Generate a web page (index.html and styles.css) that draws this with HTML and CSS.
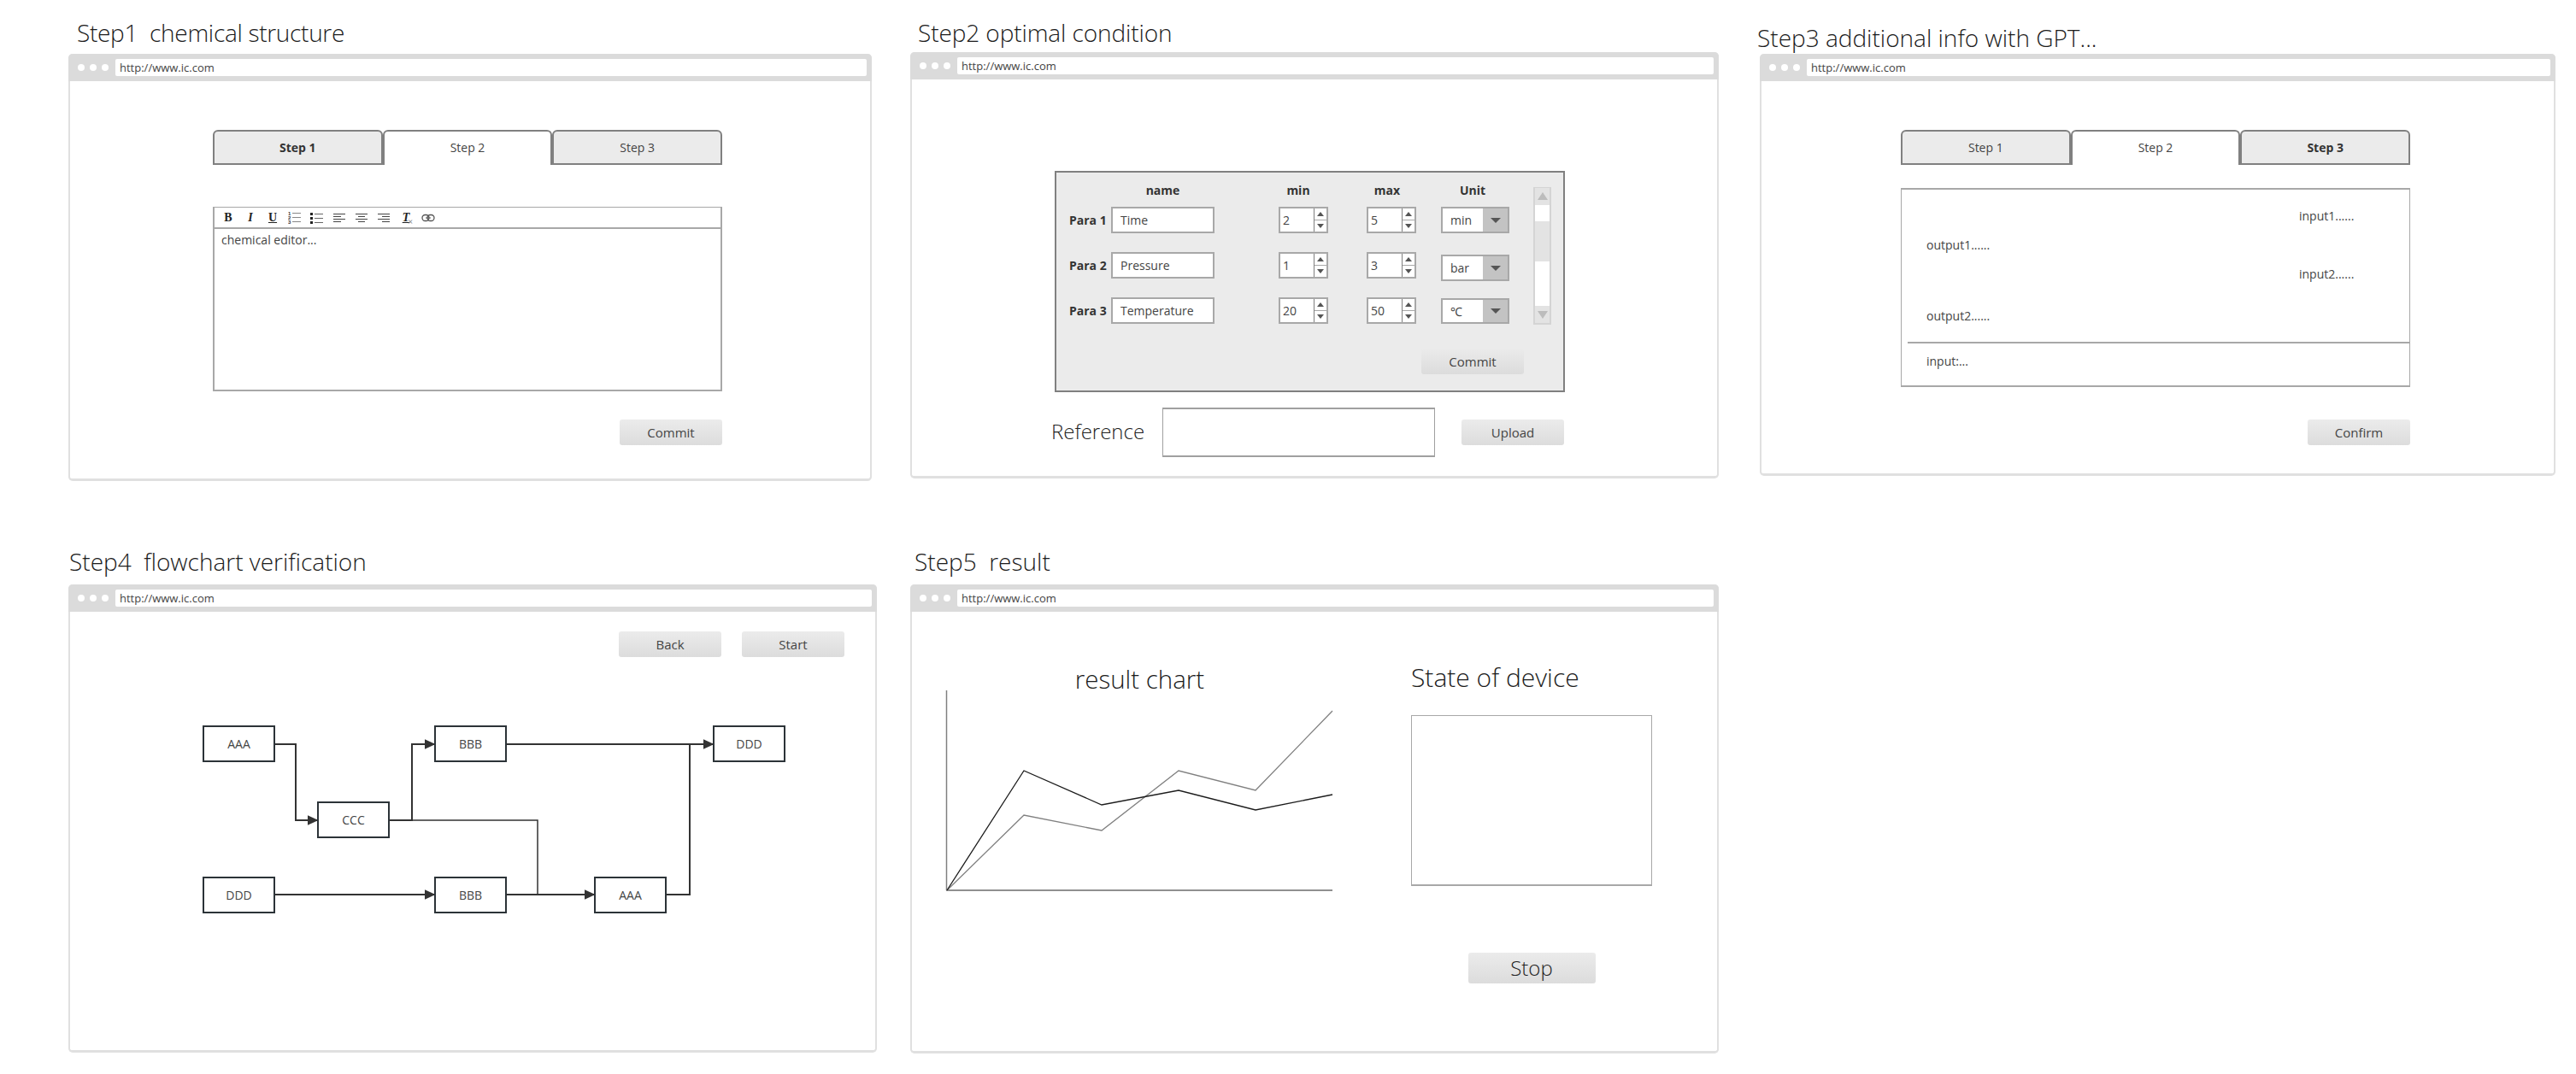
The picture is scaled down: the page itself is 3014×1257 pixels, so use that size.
FILE: index.html
```html
<!DOCTYPE html>
<html>
  <head>
    <meta charset="utf-8">
    <title>Workflow wireframes</title>
    <link rel="stylesheet" href="styles.css">
  </head>
  <body>
    <div class="row row-top">

      <!-- Step 1 -->
      <section class="step step1">
        <h2 class="step-title">Step1  chemical structure</h2>
        <div class="window">
          <div class="chrome"><span class="dots"><i></i><i></i><i></i></span><div class="address">http://www.ic.com</div></div>
          <div class="body body1">
            <div class="tabs">
              <div class="tab tab-bold">Step 1</div>
              <div class="tab tab-active">Step 2</div>
              <div class="tab">Step 3</div>
            </div>
            <div class="editor">
              <div class="toolbar">
                <span class="tool tool-b">B</span>
                <span class="tool tool-i">I</span>
                <span class="tool tool-u">U</span>
                <span class="tool"><svg width="16" height="15" viewBox="0 0 16 15"><g class="tiny-num"><text x="0" y="5">1</text><text x="0" y="10">2</text><text x="0" y="15">3</text></g><path d="M5 2.500H15M5 7.500H15M5 12.500H15" stroke="#888" stroke-width="1"/></svg></span>
                <span class="tool"><svg width="16" height="14" viewBox="0 0 16 14"><g fill="#222"><rect x="0" y="1" width="3" height="3"/><rect x="0" y="6" width="3" height="3"/><rect x="0" y="11" width="3" height="3"/></g><path d="M5 2.500H15M5 7.500H15M5 12.500H15" stroke="#666" stroke-width="1"/></svg></span>
                <span class="tool"><svg width="14" height="12" viewBox="0 0 14 12"><path d="M0 1.500H14M0 4.500H9M0 7.500H14M0 10.500H9" stroke="#444" stroke-width="1"/></svg></span>
                <span class="tool"><svg width="14" height="12" viewBox="0 0 14 12"><path d="M0 1.500H14M3 4.500H11M0 7.500H14M3 10.500H11" stroke="#444" stroke-width="1"/></svg></span>
                <span class="tool"><svg width="14" height="12" viewBox="0 0 14 12"><path d="M0 1.500H14M5 4.500H14M0 7.500H14M5 10.500H14" stroke="#444" stroke-width="1"/></svg></span>
                <span class="tool tool-clear">T<i>×</i></span>
                <span class="tool"><svg width="16" height="10" viewBox="0 0 16 10"><g fill="none" stroke="#555" stroke-width="1.3"><rect x="1" y="1.500" width="8" height="7" rx="3.500"/><rect x="7" y="1.500" width="8" height="7" rx="3.500"/></g><path d="M5 5H11" stroke="#555"/></svg></span>
              </div>
              <div class="editor-text">chemical editor...</div>
            </div>
            <div class="actions actions1"><button class="btn">Commit</button></div>
          </div>
        </div>
      </section>

      <!-- Step 2 -->
      <section class="step step2">
        <h2 class="step-title">Step2 optimal condition</h2>
        <div class="window">
          <div class="chrome"><span class="dots"><i></i><i></i><i></i></span><div class="address">http://www.ic.com</div></div>
          <div class="body body2">
            <div class="panel">
              <div class="panel-main">
                <div class="param-table">
                  <div class="param-head">
                    <span class="cell-label"></span>
                    <span class="cell-name">name</span>
                    <span class="cell-min">min</span>
                    <span class="cell-max">max</span>
                    <span class="cell-unit">Unit</span>
                  </div>
                  <div class="param-row">
                    <span class="cell-label">Para 1</span>
                    <div class="field cell-name">Time</div>
                    <div class="spin cell-min"><span class="spin-value">2</span><span class="spin-btns"><b class="up"></b><b class="down"></b></span></div>
                    <div class="spin cell-max"><span class="spin-value">5</span><span class="spin-btns"><b class="up"></b><b class="down"></b></span></div>
                    <div class="select cell-unit"><span class="select-value">min</span><span class="select-btn"></span></div>
                  </div>
                  <div class="param-row">
                    <span class="cell-label">Para 2</span>
                    <div class="field cell-name">Pressure</div>
                    <div class="spin cell-min"><span class="spin-value">1</span><span class="spin-btns"><b class="up"></b><b class="down"></b></span></div>
                    <div class="spin cell-max"><span class="spin-value">3</span><span class="spin-btns"><b class="up"></b><b class="down"></b></span></div>
                    <div class="select cell-unit select-low"><span class="select-value">bar</span><span class="select-btn"></span></div>
                  </div>
                  <div class="param-row">
                    <span class="cell-label">Para 3</span>
                    <div class="field cell-name">Temperature</div>
                    <div class="spin cell-min"><span class="spin-value">20</span><span class="spin-btns"><b class="up"></b><b class="down"></b></span></div>
                    <div class="spin cell-max"><span class="spin-value">50</span><span class="spin-btns"><b class="up"></b><b class="down"></b></span></div>
                    <div class="select cell-unit select-last"><span class="select-value">℃</span><span class="select-btn"></span></div>
                  </div>
                </div>
                <div class="scrollbar">
                  <div class="scroll-btn"><b class="scroll-up"></b></div>
                  <div class="scroll-track scroll-a"></div>
                  <div class="scroll-thumb"></div>
                  <div class="scroll-track scroll-b"></div>
                  <div class="scroll-btn"><b class="scroll-down"></b></div>
                </div>
              </div>
              <div class="panel-actions"><button class="btn">Commit</button></div>
            </div>
            <div class="reference">
              <span class="reference-label">Reference</span>
              <div class="reference-box"></div>
              <button class="btn">Upload</button>
            </div>
          </div>
        </div>
      </section>

      <!-- Step 3 -->
      <section class="step step3">
        <h2 class="step-title">Step3 additional info with GPT...</h2>
        <div class="window">
          <div class="chrome"><span class="dots"><i></i><i></i><i></i></span><div class="address">http://www.ic.com</div></div>
          <div class="body body3">
            <div class="tabs">
              <div class="tab">Step 1</div>
              <div class="tab tab-active">Step 2</div>
              <div class="tab tab-bold">Step 3</div>
            </div>
            <div class="chat">
              <div class="chat-line chat-in">input1......</div>
              <div class="chat-line chat-out">output1......</div>
              <div class="chat-line chat-in">input2......</div>
              <div class="chat-line chat-out chat-gap">output2......</div>
              <div class="chat-divider"></div>
              <div class="chat-line chat-out chat-input">input:...</div>
            </div>
            <div class="actions actions3"><button class="btn">Confirm</button></div>
          </div>
        </div>
      </section>
    </div>

    <div class="row row-bottom">

      <!-- Step 4 -->
      <section class="step step4">
        <h2 class="step-title">Step4  flowchart verification</h2>
        <div class="window">
          <div class="chrome"><span class="dots"><i></i><i></i><i></i></span><div class="address">http://www.ic.com</div></div>
          <div class="body body4">
            <div class="flow-actions"><button class="btn">Back</button><button class="btn">Start</button></div>
            <svg class="flow" width="700" height="240" viewBox="0 0 700 240">
              <defs>
                <marker id="arrow" markerUnits="userSpaceOnUse" markerWidth="13" markerHeight="12" refX="12.500" refY="6" orient="auto">
                  <path d="M0 0L13 6L0 12z" fill="#333"/>
                </marker>
              </defs>
              <g class="edges">
                <path d="M89 42H114V131H140" marker-end="url(#arrow)"/>
                <path d="M223 131H250V42H277" marker-end="url(#arrow)"/>
                <path class="thin" d="M250 131H397V218"/>
                <path d="M360 42H603" marker-end="url(#arrow)"/>
                <path d="M547 218H575V42"/>
                <path d="M89 218H277" marker-end="url(#arrow)"/>
                <path d="M360 218H464" marker-end="url(#arrow)"/>
              </g>
              <g class="node"><rect x="6" y="21" width="83" height="41"/><text x="47.500" y="46.500">AAA</text></g>
              <g class="node"><rect x="140" y="110" width="83" height="41"/><text x="181.500" y="135.500">CCC</text></g>
              <g class="node"><rect x="277" y="21" width="83" height="41"/><text x="318.500" y="46.500">BBB</text></g>
              <g class="node"><rect x="603" y="21" width="83" height="41"/><text x="644.500" y="46.500">DDD</text></g>
              <g class="node"><rect x="6" y="198" width="83" height="41"/><text x="47.500" y="223.500">DDD</text></g>
              <g class="node"><rect x="277" y="198" width="83" height="41"/><text x="318.500" y="223.500">BBB</text></g>
              <g class="node"><rect x="464" y="198" width="83" height="41"/><text x="505.500" y="223.500">AAA</text></g>
            </svg>
          </div>
        </div>
      </section>

      <!-- Step 5 -->
      <section class="step step5">
        <h2 class="step-title">Step5  result</h2>
        <div class="window">
          <div class="chrome"><span class="dots"><i></i><i></i><i></i></span><div class="address">http://www.ic.com</div></div>
          <div class="body body5">
            <div class="chart-col">
              <div class="big-title chart-title">result chart</div>
              <svg class="chart" width="455" height="236" viewBox="0 0 455 236">
                <path class="axis-y" d="M1.500 0V234"/>
                <path class="axis-x" d="M1 234H453"/>
                <polyline class="series-gray" points="2,234 92,146 183,164 273,94 363,117 453,24"/>
                <polyline class="series-dark" points="2,234 92,94 183,134 273,117 363,140 453,122"/>
              </svg>
            </div>
            <div class="state-col">
              <div class="big-title state-title">State of device</div>
              <div class="state-box"></div>
              <button class="btn btn-stop">Stop</button>
            </div>
          </div>
        </div>
      </section>
    </div>
  </body>
</html>
```

FILE: styles.css
```css
* {
  box-sizing: border-box;
}

body {
  margin: 0;
  background: #fff;
  color: #444;
  font-family: "Open Sans", "Liberation Sans", sans-serif;
  font-weight: 400;
}

.row {
  display: flex;
  align-items: flex-start;
}

.row-top {
  padding: 20px 0 0 80px;
}

.row-bottom {
  padding: 76px 0 0 80px;
}

.step-title {
  margin: 0;
  color: #1c1c1c;
  font-size: 28px;
  font-weight: 300;
  line-height: 36px;
  white-space: pre;
}

.step1 { width: 940px; }
.step1 .step-title { padding-left: 10px; margin-bottom: 7px; letter-spacing: -0.3px; }
.step1 .window { height: 500px; }

.step2 { width: 946px; margin-left: 45px; }
.step2 .step-title { padding-left: 9px; margin-bottom: 5px; letter-spacing: -0.1px; }
.step2 .window { height: 499px; }

.step3 { width: 931px; margin-left: 48px; padding-top: 6px; }
.step3 .step-title { margin-left: -3px; margin-bottom: 1px; }
.step3 .window { height: 494px; }

.step4 { width: 946px; }
.step4 .step-title { padding-left: 1px; margin-bottom: 9px; }
.step4 .window { height: 548px; }

.step5 { width: 946px; margin-left: 39px; }
.step5 .step-title { padding-left: 5px; margin-bottom: 9px; }
.step5 .window { height: 549px; }

/* browser window frame */
.window {
  border: 2px solid #e0e0e0;
  border-top: 0;
  border-bottom-width: 3px;
  border-radius: 5px;
  background: #fff;
}

.chrome {
  display: flex;
  align-items: center;
  height: 32px;
  margin: 0 -2px;
  padding: 0 6px 0 11px;
  background: #dbdbdb;
  border-radius: 5px 5px 0 0;
}

.dots {
  display: flex;
  gap: 6px;
  width: 44px;
}

.dots i {
  width: 8px;
  height: 8px;
  border-radius: 50%;
  background: #fff;
}

.address {
  flex: 1;
  height: 20px;
  padding-left: 5px;
  background: #fff;
  border-radius: 2px;
  font-size: 13px;
  line-height: 20px;
}

/* shared controls */
.btn {
  width: 120px;
  height: 30px;
  padding: 0;
  border: 0;
  border-radius: 3px;
  background: linear-gradient(#ebebeb, #dcdcdc);
  color: #444;
  font-family: inherit;
  font-size: 15px;
  font-weight: 400;
  line-height: 28px;
}

.tabs {
  display: flex;
}

.tab {
  flex: 1;
  height: 41px;
  border: 2px solid #808080;
  border-radius: 6px 6px 0 0;
  background: #ebebeb;
  font-size: 14px;
  line-height: 37px;
  text-align: center;
}

.tab-bold {
  color: #333;
  font-weight: 700;
}

.tab-active {
  border-bottom: 0;
  background: #fff;
}

.actions {
  display: flex;
  justify-content: flex-end;
}

/* step 1 */
.body1 {
  width: 763px;
  padding: 57px 0 0 167px;
}

.editor {
  height: 216px;
  margin-top: 49px;
  border: 2px solid #a8a8a8;
  border-top-width: 1px;
}

.toolbar {
  display: flex;
  align-items: center;
  height: 25px;
  padding-left: 3px;
  border-bottom: 2px solid #a8a8a8;
}

.tool {
  display: flex;
  align-items: center;
  justify-content: center;
  position: relative;
  width: 26px;
  color: #222;
  font-family: "Liberation Serif", serif;
  font-size: 14px;
  font-weight: 700;
}

.tool-i,
.tool-clear {
  font-style: italic;
}

.tool-u,
.tool-clear {
  text-decoration: underline;
}

.tool-clear i {
  position: absolute;
  left: 15px;
  top: 6px;
  color: #888;
  font-size: 11px;
  font-style: normal;
}

.tiny-num text {
  fill: #333;
  font-family: "Liberation Sans", sans-serif;
  font-size: 6px;
  font-weight: 700;
}

.editor-text {
  padding: 3px 8px;
  font-size: 14px;
}

.actions1 {
  margin-top: 33px;
}

/* step 2 */
.body2 {
  padding: 107px 0 0 167px;
}

.panel {
  width: 597px;
  height: 259px;
  padding: 0 0 0 15px;
  border: 2px solid #808080;
  background: #ebebeb;
}

.panel-main {
  display: flex;
  align-items: flex-start;
}

.param-table {
  width: 515px;
  padding-top: 12px;
}

.param-head {
  display: flex;
  height: 18px;
  margin-bottom: 10px;
  color: #333;
  font-size: 14px;
  font-weight: 700;
  line-height: 18px;
  text-align: center;
}

.param-row {
  display: flex;
  align-items: flex-start;
  height: 31px;
  margin-bottom: 22px;
  font-size: 14px;
}

.param-row:last-child {
  margin-bottom: 0;
}

.cell-label {
  width: 49px;
  color: #333;
  font-size: 14px;
  font-weight: 700;
  line-height: 31px;
}

.cell-name { width: 121px; }
.cell-min { width: 58px; margin-left: 75px; }
.cell-max { width: 58px; margin-left: 45px; }
.cell-unit { width: 80px; margin-left: 29px; }

.param-head .cell-min { padding-right: 12px; }
.param-head .cell-max { padding-right: 10px; }
.param-head .cell-unit { padding-right: 6px; }

.field {
  height: 31px;
  padding-left: 9px;
  border: 2px solid #a8a8a8;
  background: #fff;
  line-height: 27px;
}

.spin {
  display: flex;
  height: 31px;
  border: 2px solid #a8a8a8;
  background: #fff;
}

.spin-value {
  flex: 1;
  padding-left: 3px;
  line-height: 27px;
}

.spin-btns {
  display: flex;
  flex-direction: column;
  width: 15px;
  border-left: 1px solid #808080;
}

.spin-btns b {
  display: flex;
  flex: 1;
  align-items: center;
  justify-content: center;
}

.spin-btns .up {
  border-bottom: 1px solid #a8a8a8;
}

.spin-btns .up::after {
  content: "";
  border: 4px solid transparent;
  border-top: 0;
  border-bottom: 5px solid #555;
}

.spin-btns .down::after {
  content: "";
  border: 4px solid transparent;
  border-bottom: 0;
  border-top: 5px solid #555;
}

.select {
  display: flex;
  height: 31px;
  border: 2px solid #a8a8a8;
}

.select-low { margin-top: 3px; }
.select-last { margin-top: 1px; height: 30px; }

.select-value {
  flex: 1;
  padding-left: 9px;
  background: #fff;
  line-height: 27px;
}

.select-btn {
  display: flex;
  align-items: center;
  justify-content: center;
  width: 29px;
  background: #c3c3c3;
}

.select-btn::after {
  content: "";
  border: 6px solid transparent;
  border-bottom: 0;
  border-top: 6px solid #555;
}

.scrollbar {
  display: flex;
  flex-direction: column;
  width: 21px;
  height: 161px;
  margin: 17px 0 0 28px;
  border: 2px solid #d4d4d4;
  border-top-width: 1px;
  background: #fff;
}

.scroll-btn {
  display: flex;
  align-items: center;
  justify-content: center;
  height: 20px;
  background: #e3e3e3;
}

.scroll-up {
  border: 6px solid transparent;
  border-top: 0;
  border-bottom: 9px solid #bcbcbc;
}

.scroll-down {
  border: 6px solid transparent;
  border-bottom: 0;
  border-top: 9px solid #bcbcbc;
}

.scroll-a { height: 19px; }
.scroll-b { height: 52px; }
.scroll-thumb { height: 48px; background: #e3e3e3; }

.panel-actions {
  display: flex;
  justify-content: flex-end;
  margin: 28px 46px 0 0;
}

.reference {
  display: flex;
  align-items: center;
  margin: 18px 0 0 -4px;
}

.reference-label {
  width: 130px;
  margin-top: -4px;
  color: #222;
  font-size: 24px;
  font-weight: 300;
}

.reference-box {
  width: 319px;
  height: 58px;
  margin-right: 31px;
  border: 1px solid #a0a0a0;
  border-width: 2px 1px;
}

/* step 3 */
.body3 {
  width: 759px;
  padding: 57px 0 0 163px;
}

.chat {
  height: 233px;
  margin-top: 27px;
  padding-top: 21px;
  border: 2px solid #a8a8a8;
  border-width: 2px 1px;
}

.chat-line {
  height: 20px;
  margin-bottom: 14px;
  font-size: 14px;
  line-height: 20px;
}

.chat-in { padding-left: 465px; }
.chat-out { padding-left: 29px; }
.chat-gap { margin: 29px 0 20px; }

.chat-divider {
  height: 2px;
  margin-left: 7px;
  background: #a8a8a8;
}

.chat-input {
  margin-top: 11px;
}

.actions3 {
  margin-top: 38px;
}

/* step 4 */
.body4 {
  padding-top: 23px;
}

.flow-actions {
  display: flex;
  gap: 24px;
  margin-left: 642px;
}

.flow {
  display: block;
  margin: 60px 0 0 150px;
}

.edges path {
  fill: none;
  stroke: #333;
  stroke-width: 2;
}

.edges .thin {
  stroke-width: 1.5;
}

.node rect {
  fill: #fff;
  stroke: #2c3338;
  stroke-width: 2;
}

.node text {
  fill: #444;
  font-size: 14px;
  text-anchor: middle;
}

/* step 5 */
.body5 {
  display: flex;
  align-items: flex-start;
  padding: 70px 0 0 39px;
}

.chart-col {
  width: 455px;
}

.big-title {
  color: #1c1c1c;
  font-weight: 300;
  line-height: 22px;
}

.chart-title {
  margin-top: -2px;
  margin-bottom: 2px;
  font-size: 29.5px;
  text-align: center;
}

.chart {
  display: block;
}

.axis-y {
  stroke: #808080;
  stroke-width: 1.5;
}

.axis-x {
  stroke: #909090;
  stroke-width: 2;
}

.series-gray,
.series-dark {
  fill: none;
  stroke-width: 1.3;
}

.series-gray { stroke: #808080; }
.series-dark { stroke: #1c1c1c; }

.state-col {
  display: flex;
  flex-direction: column;
  width: 282px;
  margin: -4px 0 0 90px;
}

.state-title {
  font-size: 30px;
}

.state-box {
  height: 200px;
  margin-top: 33px;
  border: 1px solid #a8a8a8;
  border-bottom-width: 2px;
}

.btn-stop {
  align-self: center;
  width: 149px;
  height: 36px;
  margin-top: 78px;
  color: #222;
  font-size: 24px;
  font-weight: 300;
}
```
